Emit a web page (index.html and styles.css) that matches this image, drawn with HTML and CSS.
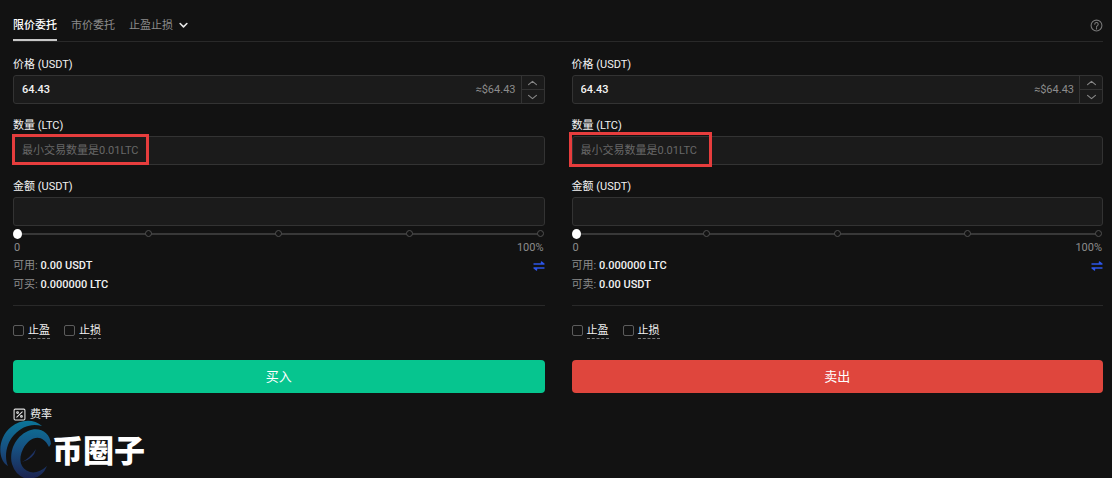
FILE: index.html
```html
<!DOCTYPE html>
<html lang="zh-CN">
<head>
<meta charset="utf-8">
<meta name="viewport" content="width=device-width, initial-scale=1">
<title>限价委托</title>
<link rel="stylesheet" href="styles.css">
</head>
<body>
<main class="trade">
  <nav class="tabs">
    <button class="tab tab-active" type="button">限价委托</button>
    <button class="tab" type="button">市价委托</button>
    <button class="tab" type="button">止盈止损
      <svg class="caret" viewBox="0 0 8 6" aria-hidden="true"><path d="M1 1.2 4 4.2 7 1.2"/></svg>
    </button>
    <button class="help" type="button" aria-label="帮助">
      <svg viewBox="0 0 12 12" aria-hidden="true"><circle cx="6" cy="6" r="5"/><path d="M4.4 4.900a1.600 1.600 0 1 1 2.400 1.300Q6 6.600 6 7.300M6 8.300v.9"/></svg>
    </button>
  </nav>

  <div class="columns">
    <form class="order">
      <div class="field">
        <label for="buy-price">价格 (USDT)</label>
        <div class="box">
          <input class="value" id="buy-price" type="text" value="64.43">
          <span class="approx">≈$64.43</span>
          <div class="stepper">
            <button type="button" aria-label="增加"><svg viewBox="0 0 8 5"><path d="M.5 4 4 1l3.500 3"/></svg></button>
            <button type="button" aria-label="减少"><svg viewBox="0 0 8 5"><path d="M.5 1 4 4l3.500-3"/></svg></button>
          </div>
        </div>
      </div>
      <div class="field">
        <label for="buy-amount">数量 (LTC)</label>
        <div class="box">
          <input id="buy-amount" type="text" placeholder="最小交易数量是0.01LTC">
          <span class="mark mark-buy"></span>
        </div>
      </div>
      <div class="field">
        <label for="buy-total">金额 (USDT)</label>
        <div class="box"><input id="buy-total" type="text"></div>
      </div>
      <div class="slider">
        <div class="ticks"><i></i><i></i><i></i><i></i><i></i></div>
        <input type="range" min="0" max="100" value="0" aria-label="买入比例">
      </div>
      <div class="scale"><span>0</span><span>100%</span></div>
      <div class="balance">
        <p>可用: <b>0.00 USDT</b></p>
        <button class="swap" type="button" aria-label="划转"><svg viewBox="0 0 12 10"><path d="M1 3h10L8.500 1v2M11 7H1l2.500 2V7"/></svg></button>
      </div>
      <div class="balance"><p>可买: <b>0.000000 LTC</b></p></div>
      <div class="options">
        <label><input type="checkbox"><span>止盈</span></label>
        <label><input type="checkbox"><span>止损</span></label>
      </div>
      <button class="submit buy" type="button">买入</button>
    </form>

    <form class="order">
      <div class="field">
        <label for="sell-price">价格 (USDT)</label>
        <div class="box">
          <input class="value" id="sell-price" type="text" value="64.43">
          <span class="approx">≈$64.43</span>
          <div class="stepper">
            <button type="button" aria-label="增加"><svg viewBox="0 0 8 5"><path d="M.5 4 4 1l3.500 3"/></svg></button>
            <button type="button" aria-label="减少"><svg viewBox="0 0 8 5"><path d="M.5 1 4 4l3.500-3"/></svg></button>
          </div>
        </div>
      </div>
      <div class="field">
        <label for="sell-amount">数量 (LTC)</label>
        <div class="box">
          <input id="sell-amount" type="text" placeholder="最小交易数量是0.01LTC">
          <span class="mark mark-sell"></span>
        </div>
      </div>
      <div class="field">
        <label for="sell-total">金额 (USDT)</label>
        <div class="box"><input id="sell-total" type="text"></div>
      </div>
      <div class="slider">
        <div class="ticks"><i></i><i></i><i></i><i></i><i></i></div>
        <input type="range" min="0" max="100" value="0" aria-label="卖出比例">
      </div>
      <div class="scale"><span>0</span><span>100%</span></div>
      <div class="balance">
        <p>可用: <b>0.000000 LTC</b></p>
        <button class="swap" type="button" aria-label="划转"><svg viewBox="0 0 12 10"><path d="M1 3h10L8.500 1v2M11 7H1l2.500 2V7"/></svg></button>
      </div>
      <div class="balance"><p>可卖: <b>0.00 USDT</b></p></div>
      <div class="options">
        <label><input type="checkbox"><span>止盈</span></label>
        <label><input type="checkbox"><span>止损</span></label>
      </div>
      <button class="submit sell" type="button">卖出</button>
    </form>
  </div>

  <a class="fee" href="#">
    <svg viewBox="0 0 12 12" aria-hidden="true"><rect x="1" y="1" width="10" height="10" rx="1"/><path d="M8.500 3.500l-5 5"/><circle cx="4.200" cy="4.200" r=".8"/><circle cx="7.800" cy="7.800" r=".8"/></svg>
    <span>费率</span>
  </a>
</main>

<div class="watermark">
  <svg viewBox="0 0 52 58" aria-hidden="true">
    <defs>
      <linearGradient id="swirl" gradientUnits="userSpaceOnUse" x1="0" y1="0" x2="0" y2="58">
        <stop offset="0" stop-color="#0b7699"/>
        <stop offset=".5" stop-color="#174f80"/>
        <stop offset="1" stop-color="#1b2350"/>
      </linearGradient>
    </defs>
    <path fill="url(#swirl)" d="M42 6C34-1 21-1 11 7C1 15-2 29 2 39Q4 44 8 46C4 37 6 24 14 15C22 6 32 3 42 6Z"/>
    <path fill="url(#swirl)" d="M51 24C50 12 39 6 28 11C15 17 9 31 12 44Q15 54 24 58H34Q43 56 47 46Q38 54 30 52C20 49 18 39 23 29C29 17 42 12 49 27Z"/>
    <path fill="#1d3263" d="M36 29Q34 39 22 42Q30 38 36 29Z"/>
  </svg>
  <span>币圈子</span>
</div>
</body>
</html>
```
FILE: styles.css
```css
* { box-sizing: border-box; }

body {
  margin: 0;
  background: #121212;
  color: #f2f2f2;
  font: 11px/18px Roboto, "Noto Sans CJK SC", sans-serif;
}

button, input { font: inherit; color: inherit; }
button { padding: 0; border: 0; background: none; cursor: pointer; }
svg { display: block; fill: none; stroke-linecap: round; stroke-linejoin: round; }
p { margin: 0; }

.trade { padding: 10px 9px 0 13px; }

.tabs {
  display: flex;
  gap: 14px;
  height: 32px;
  border-bottom: 1px solid #292929;
}
.tab {
  display: flex;
  align-items: center;
  gap: 6px;
  height: 31px;
  padding-top: 2px;
  color: #8c8c8c;
  border-bottom: 2px solid transparent;
}
.tab-active { color: #fff; font-weight: 500; border-color: #c8c8c8; }
.caret { width: 9px; height: 7px; stroke: #e8e8e8; stroke-width: 1.4; }
.help { margin-left: auto; }
.help svg { width: 13px; height: 13px; stroke: #777; stroke-width: 1; }

.columns {
  display: grid;
  grid-template-columns: 1fr 1fr;
  gap: 27px;
  padding-top: 14px;
}

.field { display: grid; gap: 1px; margin-bottom: 13px; }
.field:nth-of-type(3) { margin-bottom: 2px; }

.box {
  position: relative;
  display: flex;
  height: 29px;
  border: 1px solid #333;
  border-radius: 3px;
  background: #1b1b1b;
}
.box input {
  flex: 1;
  min-width: 0;
  padding: 0 8px;
  border: 0;
  outline: 0;
  background: none;
}
.box input::placeholder { color: #686868; opacity: 1; }
.value { font-weight: 500; }
.approx { padding-right: 5px; line-height: 27px; color: #8c8c8c; }
.stepper { display: grid; width: 23px; border-left: 1px solid #333; }
.stepper button { display: grid; place-items: center; }
.stepper button + button { border-top: 1px solid #333; }
.stepper svg { width: 9px; height: 6px; stroke: #888; }

.mark { position: absolute; border: 3px solid #e63d3d; pointer-events: none; }
.mark-buy { inset: -3px auto -1px -2px; width: 137px; }
.mark-sell { inset: -5px auto -3px -4px; width: 143px; }

.slider { position: relative; height: 12px; }
.ticks {
  position: absolute;
  inset: 5px 4px auto;
  display: flex;
  justify-content: space-between;
  height: 2px;
  background: #383838;
}
.ticks i {
  width: 7px;
  height: 7px;
  margin: -3px;
  border: 1px solid #505050;
  border-radius: 50%;
  background: #121212;
}
.slider input {
  position: relative;
  display: block;
  width: 100%;
  height: 12px;
  margin: 0;
  appearance: none;
  background: none;
}
.slider input::-webkit-slider-thumb {
  appearance: none;
  width: 9px;
  height: 10px;
  border-radius: 50%;
  background: #fff;
}

.scale {
  display: flex;
  justify-content: space-between;
  padding: 0 1px;
  line-height: 16px;
  color: #8c8c8c;
}
.balance { display: flex; justify-content: space-between; align-items: center; height: 19px; color: #8c8c8c; }
.balance b { color: #f2f2f2; font-weight: 500; }
.swap svg { width: 12px; height: 10px; stroke: #2c55e8; stroke-width: 1.4; }

.options {
  display: flex;
  gap: 14px;
  margin-top: 11px;
  padding: 15px 0 21px;
  border-top: 1px solid #292929;
}
.options label { display: flex; align-items: center; gap: 4px; }
.options input {
  width: 11px;
  height: 11px;
  margin: 0;
  appearance: none;
  border: 1px solid #5c5c5c;
  border-radius: 2px;
}
.options span { padding-top: 2px; line-height: 15px; border-bottom: 1px dashed #777; }

.submit {
  display: block;
  width: 100%;
  height: 33px;
  border-radius: 4px;
  color: #fff;
  font-size: 13px;
}
.buy { background: #06c58f; }
.sell { background: #df463d; }

.fee {
  display: inline-flex;
  align-items: center;
  gap: 4px;
  margin-top: 11px;
  color: #f2f2f2;
  text-decoration: none;
}
.fee svg { width: 13px; height: 13px; stroke: #e0e0e0; stroke-width: 1; }
.fee span { padding-top: 2px; }

.watermark {
  position: absolute;
  left: 0;
  top: 420px;
  display: flex;
  align-items: center;
  height: 58px;
  color: #fff;
  font: 900 31px/58px "Noto Sans CJK SC", sans-serif;
}
.watermark svg { width: 52px; height: 58px; }
```
